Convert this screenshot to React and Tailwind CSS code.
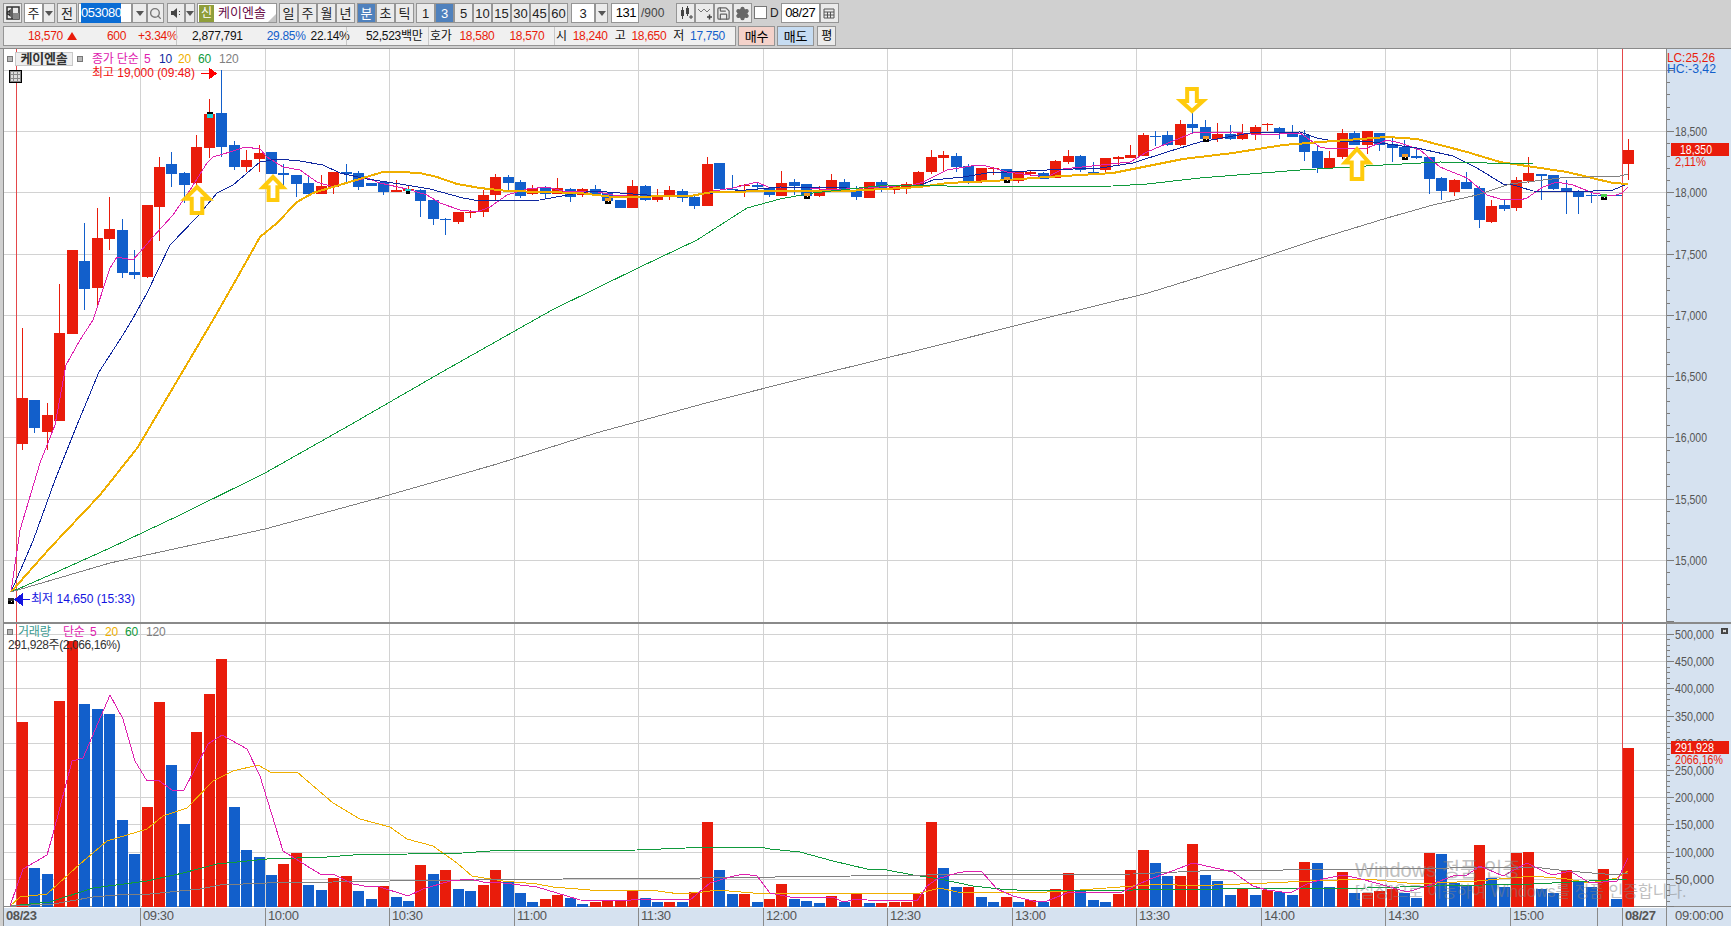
import { Search, Save, Settings } from 'lucide-react';

const RED = '#e91c0b';
const BLUE = '#125fcb';

// [color, high, bodyTop, bodyBottom, low] in page pixels
const candles = [
  ['r', 328, 398, 444, 450], ['b', 400, 400, 428, 433], ['r', 403, 415, 432, 450], ['r', 284, 333, 421, 421],
  ['r', 250, 250, 334, 334], ['b', 223, 261, 289, 310], ['r', 208, 238, 288, 307], ['r', 197, 229, 239, 250],
  ['b', 219, 230, 273, 278], ['b', 250, 272, 275, 279], ['r', 205, 205, 277, 278], ['r', 157, 167, 207, 241],
  ['b', 152, 164, 174, 187], ['b', 172, 173, 185, 203], ['r', 135, 147, 183, 186], ['r', 99, 114, 148, 158],
  ['b', 70, 113, 147, 157], ['b', 141, 145, 167, 170], ['r', 150, 160, 167, 172], ['r', 145, 153, 159, 172],
  ['b', 152, 152, 174, 174], ['b', 164, 173, 175, 187], ['b', 175, 175, 184, 197], ['b', 177, 183, 194, 194],
  ['r', 175, 186, 194, 194], ['r', 172, 172, 187, 194], ['b', 164, 172, 174, 183], ['b', 171, 173, 187, 190],
  ['b', 183, 183, 186, 186], ['b', 182, 182, 192, 195], ['r', 180, 190, 192, 192], ['r', 186, 189, 191, 192],
  ['b', 189, 190, 201, 217], ['b', 200, 200, 219, 225], ['b', 218, 219, 220, 235], ['r', 212, 212, 222, 224],
  ['r', 210, 212, 213, 218], ['r', 190, 195, 212, 217], ['r', 174, 177, 195, 200], ['b', 175, 177, 183, 192],
  ['b', 180, 182, 196, 198], ['r', 185, 188, 194, 195], ['b', 186, 188, 194, 198], ['r', 178, 188, 194, 194],
  ['b', 188, 189, 197, 202], ['r', 188, 189, 195, 197], ['b', 185, 189, 194, 194], ['b', 193, 193, 201, 204],
  ['b', 200, 200, 208, 208], ['r', 180, 186, 208, 208], ['b', 185, 186, 200, 201], ['r', 189, 196, 200, 202],
  ['r', 186, 190, 197, 200], ['b', 189, 191, 198, 202], ['b', 195, 197, 206, 209], ['r', 157, 164, 206, 206],
  ['b', 163, 163, 189, 189], ['b', 175, 189, 190, 190], ['r', 184, 185, 186, 197], ['b', 182, 185, 187, 192],
  ['b', 188, 188, 195, 197], ['r', 171, 183, 196, 196], ['b', 179, 182, 186, 195], ['b', 184, 184, 196, 198],
  ['r', 186, 190, 196, 197], ['r', 174, 180, 191, 191], ['b', 179, 182, 192, 192], ['b', 186, 191, 197, 200],
  ['r', 182, 182, 198, 198], ['b', 180, 182, 190, 192], ['r', 185, 186, 190, 194], ['r', 182, 184, 187, 194],
  ['r', 171, 172, 185, 188], ['r', 150, 157, 172, 174], ['r', 151, 155, 158, 172], ['b', 153, 156, 167, 172],
  ['b', 164, 166, 182, 184], ['r', 168, 168, 181, 183], ['r', 167, 168, 169, 175], ['b', 169, 169, 180, 183],
  ['r', 172, 172, 181, 183], ['r', 171, 172, 174, 176], ['b', 172, 173, 179, 179], ['r', 160, 161, 178, 178],
  ['r', 150, 156, 162, 164], ['b', 155, 156, 170, 172], ['b', 162, 172, 173, 174], ['r', 158, 158, 170, 172],
  ['r', 156, 157, 159, 165], ['r', 145, 155, 158, 158], ['r', 133, 135, 156, 156], ['b', 131, 136, 137, 146],
  ['b', 131, 135, 145, 146], ['r', 120, 124, 145, 146], ['b', 112, 124, 128, 133], ['b', 120, 127, 139, 142],
  ['r', 123, 134, 139, 142], ['b', 125, 134, 139, 140], ['r', 124, 133, 139, 140], ['r', 125, 127, 134, 140],
  ['r', 123, 124, 125, 131], ['b', 127, 128, 132, 139], ['b', 125, 133, 137, 137], ['b', 130, 135, 152, 161],
  ['b', 145, 151, 168, 173], ['r', 151, 158, 168, 168], ['r', 129, 133, 157, 159], ['b', 131, 133, 145, 145],
  ['r', 131, 131, 145, 154], ['b', 133, 133, 145, 151], ['b', 138, 144, 148, 162], ['b', 140, 147, 157, 157],
  ['b', 149, 156, 158, 159], ['b', 157, 157, 179, 194], ['b', 177, 178, 191, 200], ['r', 179, 180, 192, 196],
  ['b', 172, 182, 189, 189], ['b', 186, 188, 220, 228], ['r', 200, 206, 222, 223], ['b', 200, 205, 209, 211],
  ['r', 177, 180, 208, 211], ['r', 157, 173, 181, 183], ['b', 174, 174, 176, 200], ['b', 175, 175, 189, 190],
  ['b', 180, 188, 192, 214], ['b', 190, 191, 197, 214], ['b', 193, 195, 196, 203], ['b', 195, 195, 196, 196],
  ['b', 195, 195, 196, 196], ['r', 139, 150, 164, 180],
];

// [color, top] of the volume bars
const volumes = [
  ['r', 721], ['b', 867], ['b', 873], ['r', 700], ['r', 640], ['b', 703], ['b', 708], ['b', 713], ['b', 819], ['b', 853],
  ['r', 806], ['r', 701], ['b', 764], ['b', 823], ['r', 731], ['r', 693], ['r', 658], ['b', 806], ['b', 849], ['b', 856],
  ['b', 874], ['r', 863], ['r', 852], ['b', 884], ['b', 889], ['r', 877], ['r', 875], ['b', 890], ['b', 898], ['r', 885],
  ['b', 896], ['b', 900], ['r', 864], ['b', 873], ['r', 869], ['b', 888], ['b', 890], ['r', 884], ['r', 869], ['b', 880],
  ['b', 892], ['b', 901], ['r', 898], ['r', 894], ['b', 897], ['b', 903], ['r', 901], ['r', 899], ['r', 899], ['r', 890],
  ['b', 897], ['b', 901], ['r', 901], ['b', 901], ['r', 891], ['r', 821], ['b', 869], ['b', 893], ['r', 893], ['b', 901],
  ['r', 898], ['r', 883], ['b', 898], ['b', 900], ['b', 902], ['r', 895], ['b', 901], ['r', 893], ['b', 902], ['r', 902],
  ['r', 901], ['r', 901], ['r', 893], ['r', 821], ['b', 867], ['b', 886], ['r', 886], ['b', 896], ['b', 901], ['r', 896],
  ['b', 901], ['r', 899], ['b', 901], ['r', 888], ['r', 872], ['b', 890], ['b', 899], ['b', 901], ['r', 893], ['r', 869],
  ['r', 849], ['b', 862], ['b', 875], ['r', 875], ['r', 843], ['b', 874], ['b', 880], ['b', 894], ['r', 888], ['b', 894],
  ['r', 889], ['b', 891], ['b', 894], ['r', 861], ['b', 862], ['b', 886], ['r', 871], ['b', 892], ['r', 892], ['r', 890],
  ['r', 888], ['b', 892], ['b', 897], ['r', 852], ['b', 853], ['b', 882], ['b', 885], ['r', 844], ['b', 877], ['b', 886],
  ['r', 852], ['r', 851], ['b', 888], ['b', 892], ['r', 869], ['b', 880], ['b', 886], ['r', 868], ['b', 898], ['r', 747],
];

const priceLines = [
  { color: '#de20ae', width: 1, points: '11,592 20,530 40,463 55,425 66,365 80,340 93,320 110,268 117,257 133,260 140,252 153,237 173,215 190,190 207,163 213,157 230,152 245,147 260,149 267,157 283,167 300,170 317,182 333,187 350,182 367,178 380,183 407,189 427,195 440,203 460,210 477,212 490,207 507,195 527,189 547,187 567,192 593,191 613,195 640,197 670,196 697,195 713,191 733,188 757,182 770,188 800,187 830,190 863,188 913,185 923,182 947,170 977,165 983,165 1007,172 1047,177 1063,169 1130,162 1147,152 1180,138 1193,133 1233,132 1260,135 1300,133 1320,147 1330,149 1367,148 1387,140 1400,143 1420,150 1440,167 1467,178 1487,195 1500,199 1520,200 1527,198 1543,187 1557,182 1573,185 1593,193 1613,196 1622,193 1628,187' },
  { color: '#10289e', width: 1, points: '11,592 33,541 55,480 77,425 99,372 121,338 132,320 147,293 170,245 197,217 217,193 233,185 260,162 277,159 300,161 323,165 340,173 367,179 400,184 430,189 463,198 480,201 540,200 567,195 593,191 620,193 673,197 713,193 780,187 847,188 913,188 933,180 963,177 987,173 1047,170 1100,168 1133,163 1167,152 1200,142 1250,133 1300,132 1317,138 1333,141 1373,142 1417,148 1453,156 1477,168 1503,184 1510,184 1533,191 1573,192 1613,190 1627,184' },
  { color: '#efaf00', width: 2, points: '11,592 50,548 100,495 138,447 177,381 213,320 237,278 260,237 277,223 297,202 313,193 333,187 363,178 383,172 400,172 420,173 437,177 457,184 480,188 507,191 580,193 613,197 690,196 713,192 780,191 847,191 920,187 947,183 993,181 1047,177 1113,173 1183,159 1233,153 1283,145 1333,141 1387,137 1417,139 1467,152 1500,162 1567,172 1613,183 1628,184' },
  { color: '#0f9a3c', width: 1, points: '11,592 50,575 110,548 180,515 265,473 350,425 442,372 552,310 640,267 697,240 747,208 780,199 813,193 887,185 947,186 963,187 1113,186 1147,184 1200,178 1300,170 1383,165 1440,162 1533,164 1622,164' },
  { color: '#808080', width: 1, points: '11,592 110,563 265,529 375,499 497,464 596,433 706,403 817,375 927,348 1038,320 1148,293 1258,259 1315,240 1387,218 1433,205 1477,195 1510,184 1560,178 1620,176 1628,174' },
];

const volumeLines = [
  { color: '#efaf00', points: '10,905 20,896 47,893 80,863 107,840 147,828 163,815 187,807 213,780 233,770 258,764 272,772 297,771 333,802 360,818 390,826 407,838 433,845 457,862 472,875 503,880 537,883 553,886 590,889 650,889 680,893 703,891 717,889 753,892 920,892 940,887 957,891 1027,892 1067,890 1133,885 1167,883 1187,885 1267,882 1310,880 1367,878 1417,883 1477,880 1533,875 1567,878 1590,882 1617,877 1628,870' },
  { color: '#0f9a3c', points: '10,905 50,901 93,887 147,880 183,872 217,863 267,858 327,856 353,854 463,852 490,850 637,849 710,846 760,846 770,848 800,851 833,860 867,868 887,869 913,874 940,878 973,885 1000,888 1033,890 1133,889 1220,888 1367,887 1433,885 1533,883 1627,878' },
  { color: '#808080', points: '10,905 53,903 93,896 117,894 150,893 200,888 220,884 267,882 333,881 390,880 563,878 700,877 927,874 1133,873 1200,870 1367,868 1533,866 1567,870 1617,874 1628,872' },
  { color: '#de20ae', points: '10,905 23,868 47,854 53,833 72,760 83,757 110,694 123,718 135,760 147,780 158,779 172,789 184,789 208,743 222,734 247,748 260,775 283,850 307,865 320,873 333,873 353,883 370,886 377,885 408,895 423,888 450,880 470,878 483,881 503,882 537,886 557,892 580,899 623,900 640,898 690,899 703,888 710,882 730,876 743,873 757,875 770,892 790,896 833,896 843,901 857,898 867,899 917,900 927,885 937,878 957,872 970,870 982,871 997,888 1013,895 1033,900 1047,900 1067,892 1087,891 1120,892 1150,878 1167,872 1193,862 1233,871 1253,885 1267,889 1290,892 1307,883 1323,878 1343,874 1357,877 1380,883 1407,891 1427,885 1453,875 1467,874 1480,865 1503,875 1527,862 1547,872 1553,874 1570,870 1590,882 1617,880 1628,857' },
];

const gridX = [140, 265, 389, 514, 638, 763, 887, 1012, 1136, 1261, 1385, 1510, 1597];
const priceTicks = [19000, 18500, 18000, 17500, 17000, 16500, 16000, 15500, 15000];
const volumeTicks = [500000, 450000, 400000, 350000, 300000, 250000, 200000, 150000, 100000, 50000];

const priceY = (p) => Math.round(131 + (18500 - p) * 0.1225);
const volumeY = (v) => Math.round(905 - v * 0.000544);
const barX = (i) => Math.round(17 + 12.45 * i);
const fmt = (n) => n.toLocaleString('en-US');

const ArrowUp = ({ x, y, h = 26, w = 24 }) => (
  <polygon
    points={`${x},${y} ${x + w / 2},${y + h * 0.45} ${x + w * 0.22},${y + h * 0.45} ${x + w * 0.22},${y + h} ${x - w * 0.22},${y + h} ${x - w * 0.22},${y + h * 0.45} ${x - w / 2},${y + h * 0.45}`}
    fill="#fff"
    stroke="#ffcb0c"
    strokeWidth="4"
  />
);

const Marker = ({ x, y, top = '#ef9a2c' }) => (
  <g shapeRendering="crispEdges">
    <rect x={x - 3} y={y} width="6" height="3" fill={top} />
    <rect x={x - 3} y={y + 3} width="6" height="3" fill="#000" />
    <rect x={x - 0.5} y={y + 3} width="1" height="1" fill="#fff" />
  </g>
);

const PriceChart = () => (
  <svg viewBox="4 49 1662 573" className="block h-[573px] w-[1662px]">
    <g shapeRendering="crispEdges">
      {priceTicks.map((p) => (
        <rect key={p} x="4" y={priceY(p)} width="1662" height="1" fill="#d2d2d2" />
      ))}
      {gridX.map((x) => (
        <rect key={x} x={x} y="49" width="1" height="573" fill="#d2d2d2" />
      ))}
      <rect x="16" y="49" width="1" height="573" fill="#e4484a" />
      <rect x="1622" y="49" width="1" height="573" fill="#e4484a" />
      {candles.map(([c, hi, top, bot, lo], i) => {
        const x = barX(i);
        const fill = c === 'r' ? RED : BLUE;
        return (
          <g key={i} fill={fill}>
            <rect x={x + 5} y={hi} width="1" height={lo - hi} />
            <rect x={x} y={top} width="11" height={Math.max(bot - top, 1)} />
          </g>
        );
      })}
    </g>
    {priceLines.map((l) => (
      <polyline key={l.color} points={l.points} fill="none" stroke={l.color} strokeWidth={l.width} shapeRendering="crispEdges" />
    ))}
    <ArrowUp x={197} y={187} />
    <ArrowUp x={273} y={177} h={23} w={20} />
    <ArrowUp x={1357} y={149} h={30} />
    <g transform="translate(1192 111) scale(1 -1)">
      <ArrowUp x={0} y={0} h={22} w={22} />
    </g>
    <g shapeRendering="crispEdges">
      <rect x="207" y="112" width="6" height="2" fill="#000" />
      <rect x="207" y="114" width="6" height="4" fill="#16d6d6" />
      <rect x="405" y="189" width="6" height="2" fill="#16d6d6" />
      <rect x="406" y="191" width="4" height="3" fill="#000" />
    </g>
    <Marker x={608} y={198} />
    <Marker x={807} y={193} />
    <Marker x={1007} y={177} />
    <Marker x={1206} y={136} />
    <Marker x={1405} y={154} />
    <Marker x={1604} y={194} top="#4ad04a" />
    <Marker x={11} y={598} top="#333" />
    <text x="92" y="77" fontSize="12" fill="#f01010" textLength="103" lengthAdjust="spacingAndGlyphs">최고 19,000 (09:48)</text>
    <path d="M201 73.500h9M209 68l7 5.500-7 5.500z" stroke="#f00" fill="#f00" shapeRendering="crispEdges" />
    <text x="31" y="603" fontSize="12" fill="#1414e0" textLength="104" lengthAdjust="spacingAndGlyphs">최저 14,650 (15:33)</text>
    <path d="M30 599.500h-9M22 594l-7 5.500 7 5.500z" stroke="#1414e0" fill="#1414e0" shapeRendering="crispEdges" />
  </svg>
);

const VolumeChart = () => (
  <svg viewBox="4 623 1662 284" className="block h-[284px] w-[1662px]">
    <g shapeRendering="crispEdges">
      {volumeTicks.map((v) => (
        <rect key={v} x="4" y={volumeY(v)} width="1662" height="1" fill="#d2d2d2" />
      ))}
      {gridX.map((x) => (
        <rect key={x} x={x} y="623" width="1" height="284" fill="#d2d2d2" />
      ))}
      {volumes.map(([c, top], i) => (
        <rect key={i} x={barX(i)} y={top} width="11" height={906 - top} fill={c === 'r' ? RED : BLUE} />
      ))}
      <rect x="16" y="623" width="1" height="284" fill="#e4484a" />
      <rect x="1622" y="623" width="1" height="284" fill="#e4484a" />
      <rect x="4" y="906" width="1662" height="1" fill="#fff" />
    </g>
    {volumeLines.map((l) => (
      <polyline key={l.color} points={l.points} fill="none" stroke={l.color} strokeWidth="1" shapeRendering="crispEdges" />
    ))}
  </svg>
);

const PriceAxis = () => (
  <svg viewBox="1667 49 64 573" className="block h-[573px] w-[64px]">
    <g fill="#7c7c7c" shapeRendering="crispEdges">
      {Array.from({ length: 46 }, (_, k) => (
        <rect key={k} x="1667" y={priceY(19000 - k * 100)} width={k % 5 === 0 ? 7 : 3} height="1" />
      ))}
    </g>
    {priceTicks.slice(1).map((p) => (
      <text key={p} x="1675" y={priceY(p) + 5} fontSize="13" fill="#555" textLength="32" lengthAdjust="spacingAndGlyphs">{fmt(p)}</text>
    ))}
    <text x="1667" y="62" fontSize="12" fill={RED} textLength="48" lengthAdjust="spacingAndGlyphs">LC:25,26</text>
    <text x="1667" y="73" fontSize="12" fill={BLUE} textLength="49" lengthAdjust="spacingAndGlyphs">HC:-3,42</text>
    <rect x="1671" y="143" width="58" height="13" fill={RED} shapeRendering="crispEdges" />
    <text x="1680" y="154" fontSize="13" fill="#fff" textLength="32" lengthAdjust="spacingAndGlyphs">18,350</text>
    <text x="1675" y="166" fontSize="13" fill={RED} textLength="31" lengthAdjust="spacingAndGlyphs">2,11%</text>
  </svg>
);

const VolumeAxis = () => (
  <svg viewBox="1667 623 64 284" className="block h-[284px] w-[64px]">
    <g fill="#7c7c7c" shapeRendering="crispEdges">
      {Array.from({ length: 51 }, (_, k) => (
        <rect key={k} x="1667" y={volumeY(k * 10000)} width={k % 5 === 0 ? 7 : 3} height="1" />
      ))}
    </g>
    {volumeTicks.map((v) => (
      <text key={v} x="1675" y={volumeY(v) + 5} fontSize="13" fill="#555" textLength="39" lengthAdjust="spacingAndGlyphs">{fmt(v)}</text>
    ))}
    <rect x="1671" y="740" width="58" height="13" fill={RED} shapeRendering="crispEdges" />
    <text x="1675" y="751" fontSize="13" fill="#fff" textLength="39" lengthAdjust="spacingAndGlyphs">291,928</text>
    <text x="1675" y="763" fontSize="13" fill={RED} textLength="48" lengthAdjust="spacingAndGlyphs">2066,16%</text>
    <rect x="1721" y="627" width="7" height="6" fill="#444" shapeRendering="crispEdges" />
    <path d="M1723 629l3 2M1726 629l-3 2" stroke="#fff" />
  </svg>
);

const Btn = ({ className = 'w-[19px]', tone = 'bg-[#ebebeb] text-[#222]', children }) => (
  <div className={`flex h-[20px] items-center justify-center border border-[#959595] text-[13px] leading-none ${tone} ${className}`}>
    {children}
  </div>
);

const ACTIVE = 'bg-[#4f81bd] text-white';
const INPUT = 'bg-white text-[#222]';

const Caret = () => (
  <svg viewBox="0 0 8 5" className="h-[5px] w-[8px]">
    <path d="M0 0h8L4 5z" fill="#555" />
  </svg>
);

const Square = () => <span className="block h-[6px] w-[6px] border border-[#777] bg-[#b8b8b8]" />;

const timeCells = [
  { label: '08/23', bold: true, w: 'w-[136px]' },
  { label: '09:30', w: 'w-[125px]' },
  { label: '10:00', w: 'w-[124px]' },
  { label: '10:30', w: 'w-[125px]' },
  { label: '11:00', w: 'w-[124px]' },
  { label: '11:30', w: 'w-[125px]' },
  { label: '12:00', w: 'w-[124px]' },
  { label: '12:30', w: 'w-[125px]' },
  { label: '13:00', w: 'w-[124px]' },
  { label: '13:30', w: 'w-[125px]' },
  { label: '14:00', w: 'w-[124px]' },
  { label: '14:30', w: 'w-[125px]' },
  { label: '15:00', w: 'w-[87px]' },
  { label: '', w: 'w-[25px]' },
  { label: '08/27', bold: true, w: 'w-[44px]' },
];

const Toolbar = () => (
  <div className="flex h-[25px] items-start pl-[3px] pt-[3px]">
    <Btn>
      <svg viewBox="0 0 14 14" className="h-[14px] w-[14px]">
        <path d="M1 1h12v12H1zM6 1v12M1 7l3-2.500v5z" fill="none" stroke="#333" strokeWidth="1.500" />
        <path d="M7 7h6v6H7z" fill="#888" />
      </svg>
    </Btn>
    <Btn className="ml-[2px] w-[19px]" tone={INPUT}>주</Btn>
    <Btn className="w-[12px]"><Caret /></Btn>
    <Btn className="ml-[2px] w-[20px]">전</Btn>
    <div className="ml-[1px] flex h-[20px] w-[54px] items-center border border-[#959595] bg-white pl-[2px] text-[13px]">
      <span className="bg-[#0a6cd4] tracking-[-0.5px] text-white">053080</span>
    </div>
    <Btn className="w-[15px]"><Caret /></Btn>
    <Btn className="w-[17px]"><Search size={13} color="#777" strokeWidth={2.5} /></Btn>
    <Btn className="ml-[3px] w-[18px]">
      <svg viewBox="0 0 12 12" className="h-[12px] w-[12px]">
        <path d="M1 4h2.500L7 1v10L3.500 8H1z" fill="#444" />
        <path d="M9 4h1v1H9zM9 7h1v1H9z" fill="#444" />
      </svg>
    </Btn>
    <Btn className="w-[10px]"><Caret /></Btn>
    <div className="relative ml-[2px] flex h-[20px] w-[80px] items-center border border-[#959595] bg-white pl-px">
      <span className="flex h-[17px] w-[15px] items-center justify-center bg-[#8f9e3b] text-[12px] text-white">신</span>
      <span className="ml-[4px] text-[13px] text-[#6b0f4a]">케이엔솔</span>
      <span className="absolute bottom-0 right-0 h-0 w-0 border-b-[8px] border-l-[8px] border-b-[#c4c4c4] border-l-transparent" />
    </div>
    <div className="ml-[2px] flex">
      <Btn>일</Btn>
      <Btn>주</Btn>
      <Btn>월</Btn>
      <Btn>년</Btn>
    </div>
    <div className="ml-[2px] flex">
      <Btn tone={ACTIVE}>분</Btn>
      <Btn>초</Btn>
      <Btn>틱</Btn>
    </div>
    <div className="ml-[2px] flex">
      <Btn>1</Btn>
      <Btn tone={ACTIVE}>3</Btn>
      <Btn>5</Btn>
      <Btn>10</Btn>
      <Btn>15</Btn>
      <Btn>30</Btn>
      <Btn>45</Btn>
      <Btn>60</Btn>
    </div>
    <Btn className="ml-[3px] w-[24px]" tone={INPUT}>3</Btn>
    <Btn className="w-[13px]"><Caret /></Btn>
    <div className="ml-[3px] flex h-[20px] w-[28px] items-center justify-end border border-[#959595] bg-white pr-[2px] text-[13px] tracking-[-0.5px]">131</div>
    <span className="ml-[2px] h-[20px] w-[35px] text-[12px] leading-[20px] text-[#444]">/900</span>
    <div className="flex">
      <Btn>
        <svg viewBox="0 0 14 14" className="h-[14px] w-[14px]">
          <path d="M2 4h3v6H2zM7 2h3v6H7z" fill="#444" />
          <path d="M3.500 1v12M8.500 0v10M10 11h4M12 9v4" stroke="#444" fill="none" />
        </svg>
      </Btn>
      <Btn>
        <svg viewBox="0 0 14 14" className="h-[14px] w-[14px]">
          <path d="M0 3l3 3 3-3 3 3 3-3" stroke="#777" fill="none" />
          <path d="M9 11h5M11.500 8.500v5" stroke="#444" strokeWidth="1.500" fill="none" />
        </svg>
      </Btn>
      <Btn><Save size={15} color="#666" strokeWidth={2} /></Btn>
      <Btn><Settings size={15} color="#666" fill="#666" strokeWidth={2} /></Btn>
    </div>
    <span className="ml-[2px] mt-[3px] h-[13px] w-[13px] border border-[#777] bg-white" />
    <span className="ml-[3px] h-[20px] text-[12px] leading-[20px] text-[#222]">D</span>
    <div className="ml-[2px] flex h-[20px] w-[39px] items-center justify-center border border-[#959595] bg-white text-[13px] tracking-[-0.5px]">08/27</div>
    <Btn>
      <svg viewBox="0 0 12 12" className="h-[12px] w-[12px]">
        <path d="M1 2h10v9H1zM1 5h10M4.500 5v6M7.500 5v6M1 8h10" fill="none" stroke="#555" />
      </svg>
    </Btn>
  </div>
);

const QuoteBar = () => (
  <div className="flex h-[23px] items-start pl-[3px] pt-px text-[12px] leading-[19px] tracking-[-0.3px]">
    <div className="flex h-[20px] w-[733px] border border-[#959595] bg-[#f0f0f0]">
      <div className="flex w-[172px] text-[#e91c0b]">
        <span className="ml-[24px]">18,570</span>
        <span className="ml-[4px] mt-[5px] h-0 w-0 border-x-[5px] border-b-[8px] border-x-transparent border-b-[#e91c0b]" />
        <span className="ml-[30px]">600</span>
        <span className="ml-[12px]">+3.34%</span>
      </div>
      <div className="flex w-[170px] border-l border-[#c8c8c8] text-[#111]">
        <span className="ml-[15px]">2,877,791</span>
        <span className="ml-[24px] text-[#125fcb]">29.85%</span>
        <span className="ml-[5px]">22.14%</span>
      </div>
      <div className="w-[82px] border-l border-[#c8c8c8] pl-[19px] text-[#111]">52,523백만</div>
      <div className="flex w-[126px] border-l border-[#c8c8c8] text-[#e91c0b]">
        <span className="ml-px text-[#111]">호가</span>
        <span className="ml-[8px]">18,580</span>
        <span className="ml-[15px]">18,570</span>
      </div>
      <div className="flex border-l border-[#c8c8c8] text-[#e91c0b]">
        <span className="ml-px text-[#111]">시</span>
        <span className="ml-[6px]">18,240</span>
        <span className="ml-[7px] text-[#111]">고</span>
        <span className="ml-[6px]">18,650</span>
        <span className="ml-[7px] text-[#111]">저</span>
        <span className="ml-[6px] text-[#125fcb]">17,750</span>
      </div>
    </div>
    <div className="ml-[2px] flex h-[20px] w-[37px] items-center justify-center border border-[#959595] bg-[#f4d2ca] text-[13px]">매수</div>
    <div className="ml-[2px] flex h-[20px] w-[37px] items-center justify-center border border-[#959595] bg-[#c6dcf2] text-[13px]">매도</div>
    <div className="ml-[3px] flex h-[20px] w-[19px] items-center justify-center border border-[#959595] bg-[#ebebeb] text-[12px]">평</div>
  </div>
);

export default function App() {
  return (
    <div className="relative flex h-[926px] w-[1731px] flex-col overflow-hidden bg-[#d0d0d0] font-['Liberation_Sans','Noto_Sans_CJK_KR',sans-serif]">
      <Toolbar />
      <QuoteBar />

      <div className="flex flex-1 flex-col border-t border-[#8a8a8a] pl-[3px]">
        {/* price pane */}
        <div className="relative flex h-[573px] border-l border-[#8a8a8a] bg-white">
          <PriceChart />
          <div className="border-l border-[#8a8a8a] bg-[#d6e2f0]">
            <PriceAxis />
          </div>
          <div className="absolute left-[3px] top-[3px] flex h-[14px] items-center text-[12px] tracking-[-0.2px]">
            <Square />
            <span className="ml-[2px] flex h-[14px] w-[58px] items-center justify-center border border-[#c8c8c8] bg-[#eee] text-[13px] font-bold text-[#333]">케이엔솔</span>
            <span className="ml-[4px]"><Square /></span>
            <span className="ml-[9px] w-[52px] text-[#de20ae]">종가 단순</span>
            <span className="w-[15px] text-[#de20ae]">5</span>
            <span className="w-[19px] text-[#10289e]">10</span>
            <span className="w-[20px] text-[#efaf00]">20</span>
            <span className="w-[21px] text-[#0f9a3c]">60</span>
            <span className="text-[#808080]">120</span>
          </div>
          <div className="absolute left-[5px] top-[21px] grid h-[13px] w-[13px] grid-cols-3 gap-px border border-black bg-[#888] p-px">
            {Array.from({ length: 9 }, (_, k) => (
              <span key={k} className="bg-[#ddd]" />
            ))}
          </div>
        </div>

        {/* volume pane */}
        <div className="relative flex h-[284px] border-l border-t-2 border-[#8a8a8a] bg-white">
          <VolumeChart />
          <div className="border-l border-[#8a8a8a] bg-[#d6e2f0]">
            <VolumeAxis />
          </div>
          <div className="absolute left-[3px] top-[1px] flex h-[14px] items-center text-[12px] tracking-[-0.2px]">
            <Square />
            <span className="ml-[5px] w-[45px] text-[#3a9a90]">거래량</span>
            <span className="w-[27px] text-[#de20ae]">단순</span>
            <span className="w-[15px] text-[#de20ae]">5</span>
            <span className="w-[20px] text-[#efaf00]">20</span>
            <span className="w-[21px] text-[#0f9a3c]">60</span>
            <span className="text-[#808080]">120</span>
          </div>
          <span className="absolute left-[4px] top-[12px] text-[12px] tracking-[-0.4px] text-[#333]">291,928주(2,066,16%)</span>
        </div>

        {/* time axis */}
        <div className="flex flex-1 border-l border-t border-[#8a8a8a] bg-[#d6e2f0] text-[13px] leading-[18px] text-[#555]">
          {timeCells.map((c, i) => (
            <div key={i} className={`${c.w} ${i === 0 ? '' : 'border-l border-[#8a8a8a]'} ${c.bold ? 'font-bold' : ''} whitespace-nowrap pl-[2px] tracking-[-0.4px]`}>
              {c.label}
            </div>
          ))}
          <div className="border-l border-[#8a8a8a] pl-[8px] tracking-[-0.3px]">09:00:00</div>
        </div>
      </div>

      {/* activation watermark */}
      <div className="pointer-events-none absolute left-[1355px] top-[858px] whitespace-nowrap text-[#828282] opacity-50">
        <div className="text-[20px] leading-[24px]">Windows 정품 인증</div>
        <div className="mt-[1px] text-[16px] leading-[18px]">[설정]으로 이동하여 Windows를 정품 인증합니다.</div>
      </div>
    </div>
  );
}
